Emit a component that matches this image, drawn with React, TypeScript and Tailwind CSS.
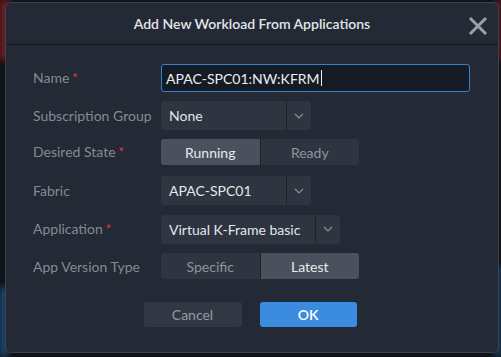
import React from "react";

const font = { fontFamily: "Lato, 'Open Sans', sans-serif" };

function Chevron() {
  return (
    <svg width="10" height="6" viewBox="0 0 10 6" fill="none">
      <path d="M1 1l4 4 4-4" stroke="#8b919a" strokeWidth="1.2" />
    </svg>
  );
}

function Label({ text, required }: { text: string; required?: boolean }) {
  return (
    <div className="w-[128px] shrink-0 text-[14px] text-[#858b94]">
      {text}
      {required && <span className="ml-[3px] text-[13px] text-[#e0393e]">*</span>}
    </div>
  );
}

function Select({ value, width, split }: { value: string; width: number; split: number }) {
  return (
    <div
      className="flex h-[29px] items-stretch rounded-[3px] bg-[#2e3440]"
      style={{ width }}
    >
      <div className="flex items-center pl-[8px] text-[14px] text-[#e4e6ea]" style={{ width: split }}>
        {value}
      </div>
      <div className="w-px bg-[#1e232b]" />
      <div className="flex flex-1 items-center justify-center">
        <Chevron />
      </div>
    </div>
  );
}

function Segmented({ options, active }: { options: string[]; active: number }) {
  return (
    <div className="flex h-[26px] w-[198px] overflow-hidden rounded-[3px] bg-[#2e3440]">
      {options.map((o, i) => (
        <div
          key={o}
          className={
            "flex flex-1 items-center justify-center text-[14px] " +
            (i === active ? "bg-[#4a515c] text-[#e8eaed]" : "text-[#8f959e]") +
            (i > 0 ? " border-l border-[#1e232b]" : "")
          }
        >
          {o}
        </div>
      ))}
    </div>
  );
}

export default function App() {
  return (
    <div className="relative h-[357px] w-[501px] overflow-hidden bg-[#101318]" style={font}>
      <div className="absolute left-0 top-0 h-[60px] w-[10px] bg-[#7a1c22] blur-[3px]" />
      <div className="absolute right-0 top-0 h-[60px] w-[6px] bg-[#7a1c22] blur-[3px]" />
      <div className="absolute bottom-0 left-0 h-[70px] w-[8px] bg-[#1c4a78] blur-[3px]" />
      <div className="absolute bottom-0 right-0 h-[90px] w-[6px] bg-[#1c4a78] blur-[3px]" />

      <div className="relative ml-[5px] mt-[2px] flex h-[351px] w-[494px] flex-col rounded-[6px] border border-[#3b424d] bg-[#232935]">
        <div className="relative flex h-[42px] items-center justify-center border-b border-[#14181e]">
          <span className="text-[14px] font-semibold text-[#e3e5e8]">Add New Workload From Applications</span>
          <svg className="absolute right-[10px] top-[13px]" width="20" height="20" viewBox="0 0 20 20">
            <path d="M2 2l16 16M18 2L2 18" stroke="#9ba0a7" strokeWidth="3" />
          </svg>
        </div>

        <div className="flex flex-col pl-[27px] pt-[19px]">
          <div className="flex h-[28px] items-center">
            <Label text="Name" required />
            <div className="flex h-[28px] w-[309px] items-center rounded-[3px] border border-[#3a80cf] bg-[#151b25] pl-[4px] text-[14px] text-[#eceef1]">
              APAC-SPC01:NW:KFRM
              <span className="ml-px h-[16px] w-px bg-[#eceef1]" />
            </div>
          </div>

          <div className="mt-[9px] flex h-[29px] items-center">
            <Label text="Subscription Group" />
            <Select value="None" width={150} split={125} />
          </div>

          <div className="mt-[9px] flex h-[26px] items-center">
            <Label text="Desired State" required />
            <Segmented options={["Running", "Ready"]} active={0} />
          </div>

          <div className="mt-[11px] flex h-[29px] items-center">
            <Label text="Fabric" />
            <Select value="APAC-SPC01" width={150} split={125} />
          </div>

          <div className="mt-[10px] flex h-[28px] items-center">
            <Label text="Application" required />
            <Select value="Virtual K-Frame basic" width={179} split={154} />
          </div>

          <div className="mt-[10px] flex h-[26px] items-center">
            <Label text="App Version Type" />
            <Segmented options={["Specific", "Latest"]} active={1} />
          </div>
        </div>

        <div className="mt-[23px] flex justify-center gap-[18px] pr-[4px]">
          <button className="flex h-[25px] w-[98px] items-center justify-center rounded-[3px] bg-[#313844] text-[14px] text-[#959ba3]">
            Cancel
          </button>
          <button className="flex h-[25px] w-[97px] items-center justify-center rounded-[3px] bg-[#3b8be0] text-[14px] font-semibold text-white">
            OK
          </button>
        </div>
      </div>
    </div>
  );
}
